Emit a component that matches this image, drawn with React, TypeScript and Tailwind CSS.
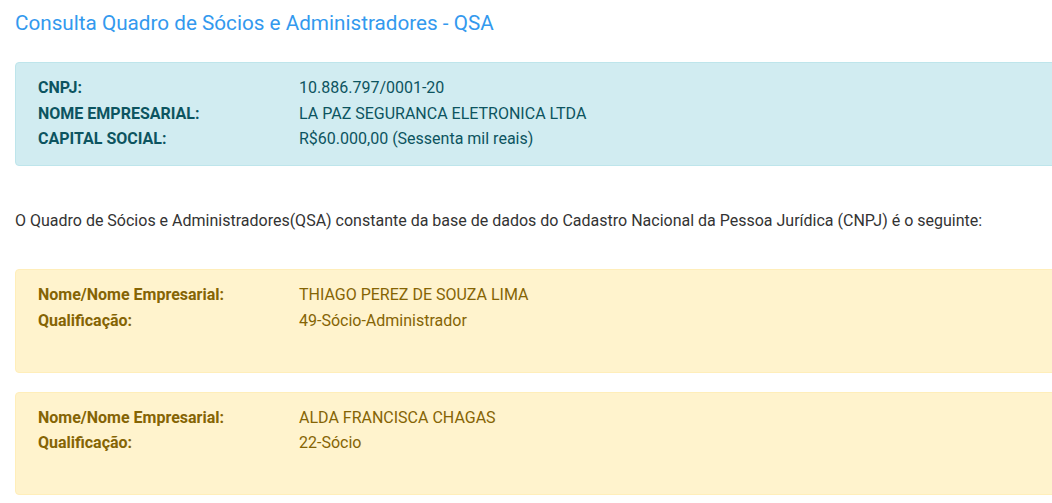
export default function App() {
  const font = { fontFamily: "Roboto, 'Liberation Sans', sans-serif" };
  const Row = ({ l, v }: { l: string; v: string }) => (
    <div className="flex h-[25.5px] items-center">
      <div className="w-[261px] shrink-0 font-bold">{l}</div>
      <div>{v}</div>
    </div>
  );
  return (
    <div className="w-[1052px] h-[503px] overflow-hidden bg-white text-[16px]" style={font}>
      <div className="pl-[15px] pt-[8px]">
        <h1 className="text-[20.7px] leading-[30px] text-[#3399ee]">Consulta Quadro de Sócios e Administradores - QSA</h1>
        <div className="mt-[24px] w-[1100px] rounded-[4px] border border-[#bee5eb] bg-[#d1ecf1] px-[22px] py-[12.5px] text-[#0c5460]">
          <Row l="CNPJ:" v="10.886.797/0001-20" />
          <Row l="NOME EMPRESARIAL:" v="LA PAZ SEGURANCA ELETRONICA LTDA" />
          <Row l="CAPITAL SOCIAL:" v="R$60.000,00 (Sessenta mil reais)" />
        </div>
        <p className="mt-[42px] leading-[25.5px] text-[#333333]">
          O Quadro de Sócios e Administradores(QSA) constante da base de dados do Cadastro Nacional da Pessoa Jurídica (CNPJ) é o seguinte:
        </p>
        <div className="mt-[36px] w-[1100px] rounded-[4px] border border-[#ffeeba] bg-[#fff3cd] px-[22px] py-[12.5px] text-[#856404]">
          <Row l="Nome/Nome Empresarial:" v="THIAGO PEREZ DE SOUZA LIMA" />
          <Row l="Qualificação:" v="49-Sócio-Administrador" />
          <div className="h-[25.5px]" />
        </div>
        <div className="mt-[19px] w-[1100px] rounded-[4px] border border-[#ffeeba] bg-[#fff3cd] px-[22px] py-[12.5px] text-[#856404]">
          <Row l="Nome/Nome Empresarial:" v="ALDA FRANCISCA CHAGAS" />
          <Row l="Qualificação:" v="22-Sócio" />
          <div className="h-[25.5px]" />
        </div>
      </div>
    </div>
  );
}
